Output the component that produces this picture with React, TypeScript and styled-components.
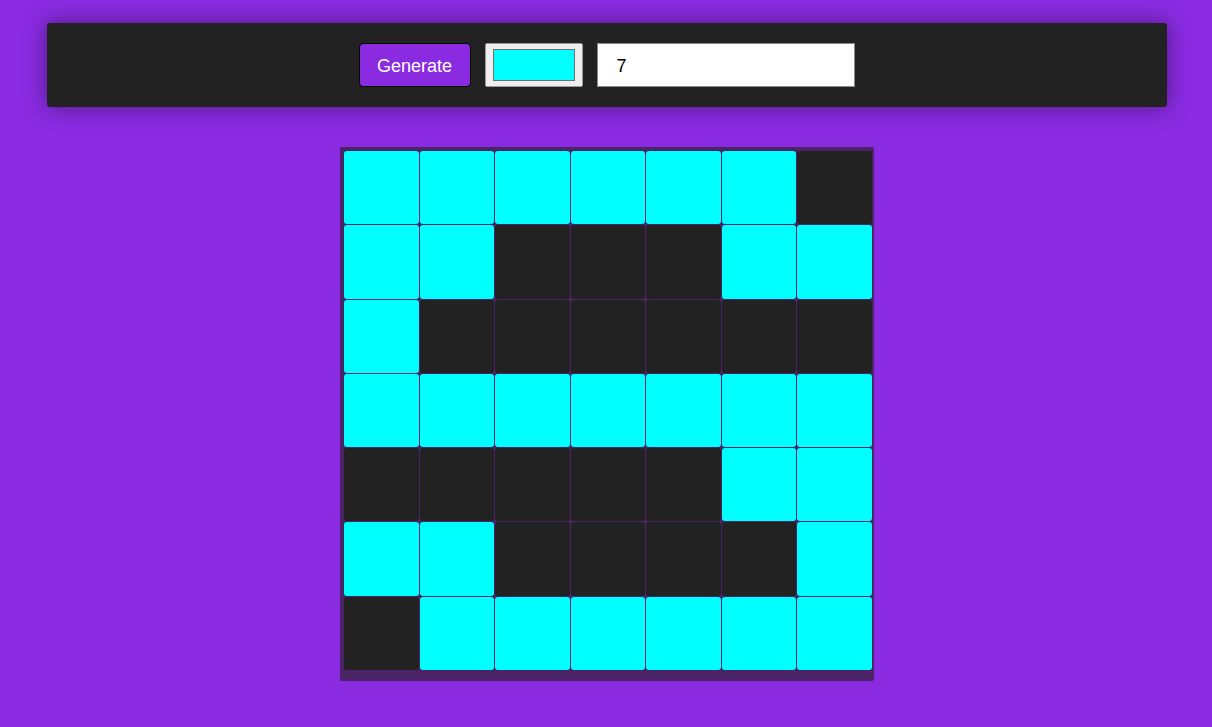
import React, { useState } from "react";
import styled, { createGlobalStyle } from "styled-components";

const GlobalStyle = createGlobalStyle`
  html, body {
    margin: 0;
    padding: 0;
    background: #8a2be2;
    font-family: "Liberation Sans", Arial, sans-serif;
  }
`;

const Page = styled.div`
  display: flex;
  flex-direction: column;
  align-items: center;
  padding: 23px 45px 40px 47px;
`;

const Toolbar = styled.header`
  align-self: stretch;
  height: 84px;
  box-sizing: border-box;
  background: #222222;
  border-radius: 3px;
  box-shadow: 0 0 22px rgba(0, 0, 0, 0.45);
  display: flex;
  align-items: center;
  justify-content: center;
  gap: 14px;
  padding-right: 1px;
`;

const GenerateButton = styled.button`
  height: 44px;
  width: 112px;
  box-sizing: border-box;
  background: #8a2be2;
  color: #ffffff;
  border: 1px solid #000000;
  border-radius: 4px;
  font-family: "Liberation Sans", Arial, sans-serif;
  font-size: 18px;
  padding: 2px 0 0;
  cursor: pointer;
`;

const ColorInput = styled.input`
  width: 98px;
  height: 44px;
  box-sizing: border-box;
  padding: 0;
  background: #efefef;
  border: 1px solid #9a9a9a;
  border-radius: 2px;
  cursor: pointer;
  &::-webkit-color-swatch-wrapper {
    padding: 5px 7px;
  }
  &::-webkit-color-swatch {
    border: 1px solid #6e6e6e;
    border-radius: 0;
  }
`;

const SizeInput = styled.input`
  width: 258px;
  height: 44px;
  box-sizing: border-box;
  border: 1px solid #8a8a8a;
  background: #ffffff;
  padding: 2px 0 0 19px;
  font-family: "Liberation Sans", Arial, sans-serif;
  font-size: 18px;
  color: #000;
  outline: none;
`;

const Board = styled.div`
  margin-top: 40px;
  width: 534px;
  height: 534px;
  box-sizing: border-box;
  padding: 4px 2px 11px 4px;
  background: #4a2466;
  border-radius: 2px;
  display: grid;
  grid-template-columns: repeat(7, 1fr);
  grid-template-rows: repeat(7, 1fr);
  gap: 1px;
`;

const Cell = styled.div<{ $on: boolean }>`
  background: ${(p) => (p.$on ? "#00ffff" : "#222222")};
  border-radius: 3px;
`;

const pattern = [
  "1111110",
  "1100011",
  "1000000",
  "1111111",
  "0000011",
  "1100001",
  "0111111",
];

export default function App() {
  const [color, setColor] = useState("#00ffff");
  const [size, setSize] = useState("7");
  return (
    <>
      <GlobalStyle />
      <Page>
        <Toolbar>
          <GenerateButton>Generate</GenerateButton>
          <ColorInput
            type="color"
            value={color}
            onChange={(e) => setColor(e.target.value)}
          />
          <SizeInput value={size} onChange={(e) => setSize(e.target.value)} />
        </Toolbar>
        <Board>
          {pattern.flatMap((row, r) =>
            row.split("").map((c, i) => <Cell key={`${r}-${i}`} $on={c === "1"} />)
          )}
        </Board>
      </Page>
    </>
  );
}
